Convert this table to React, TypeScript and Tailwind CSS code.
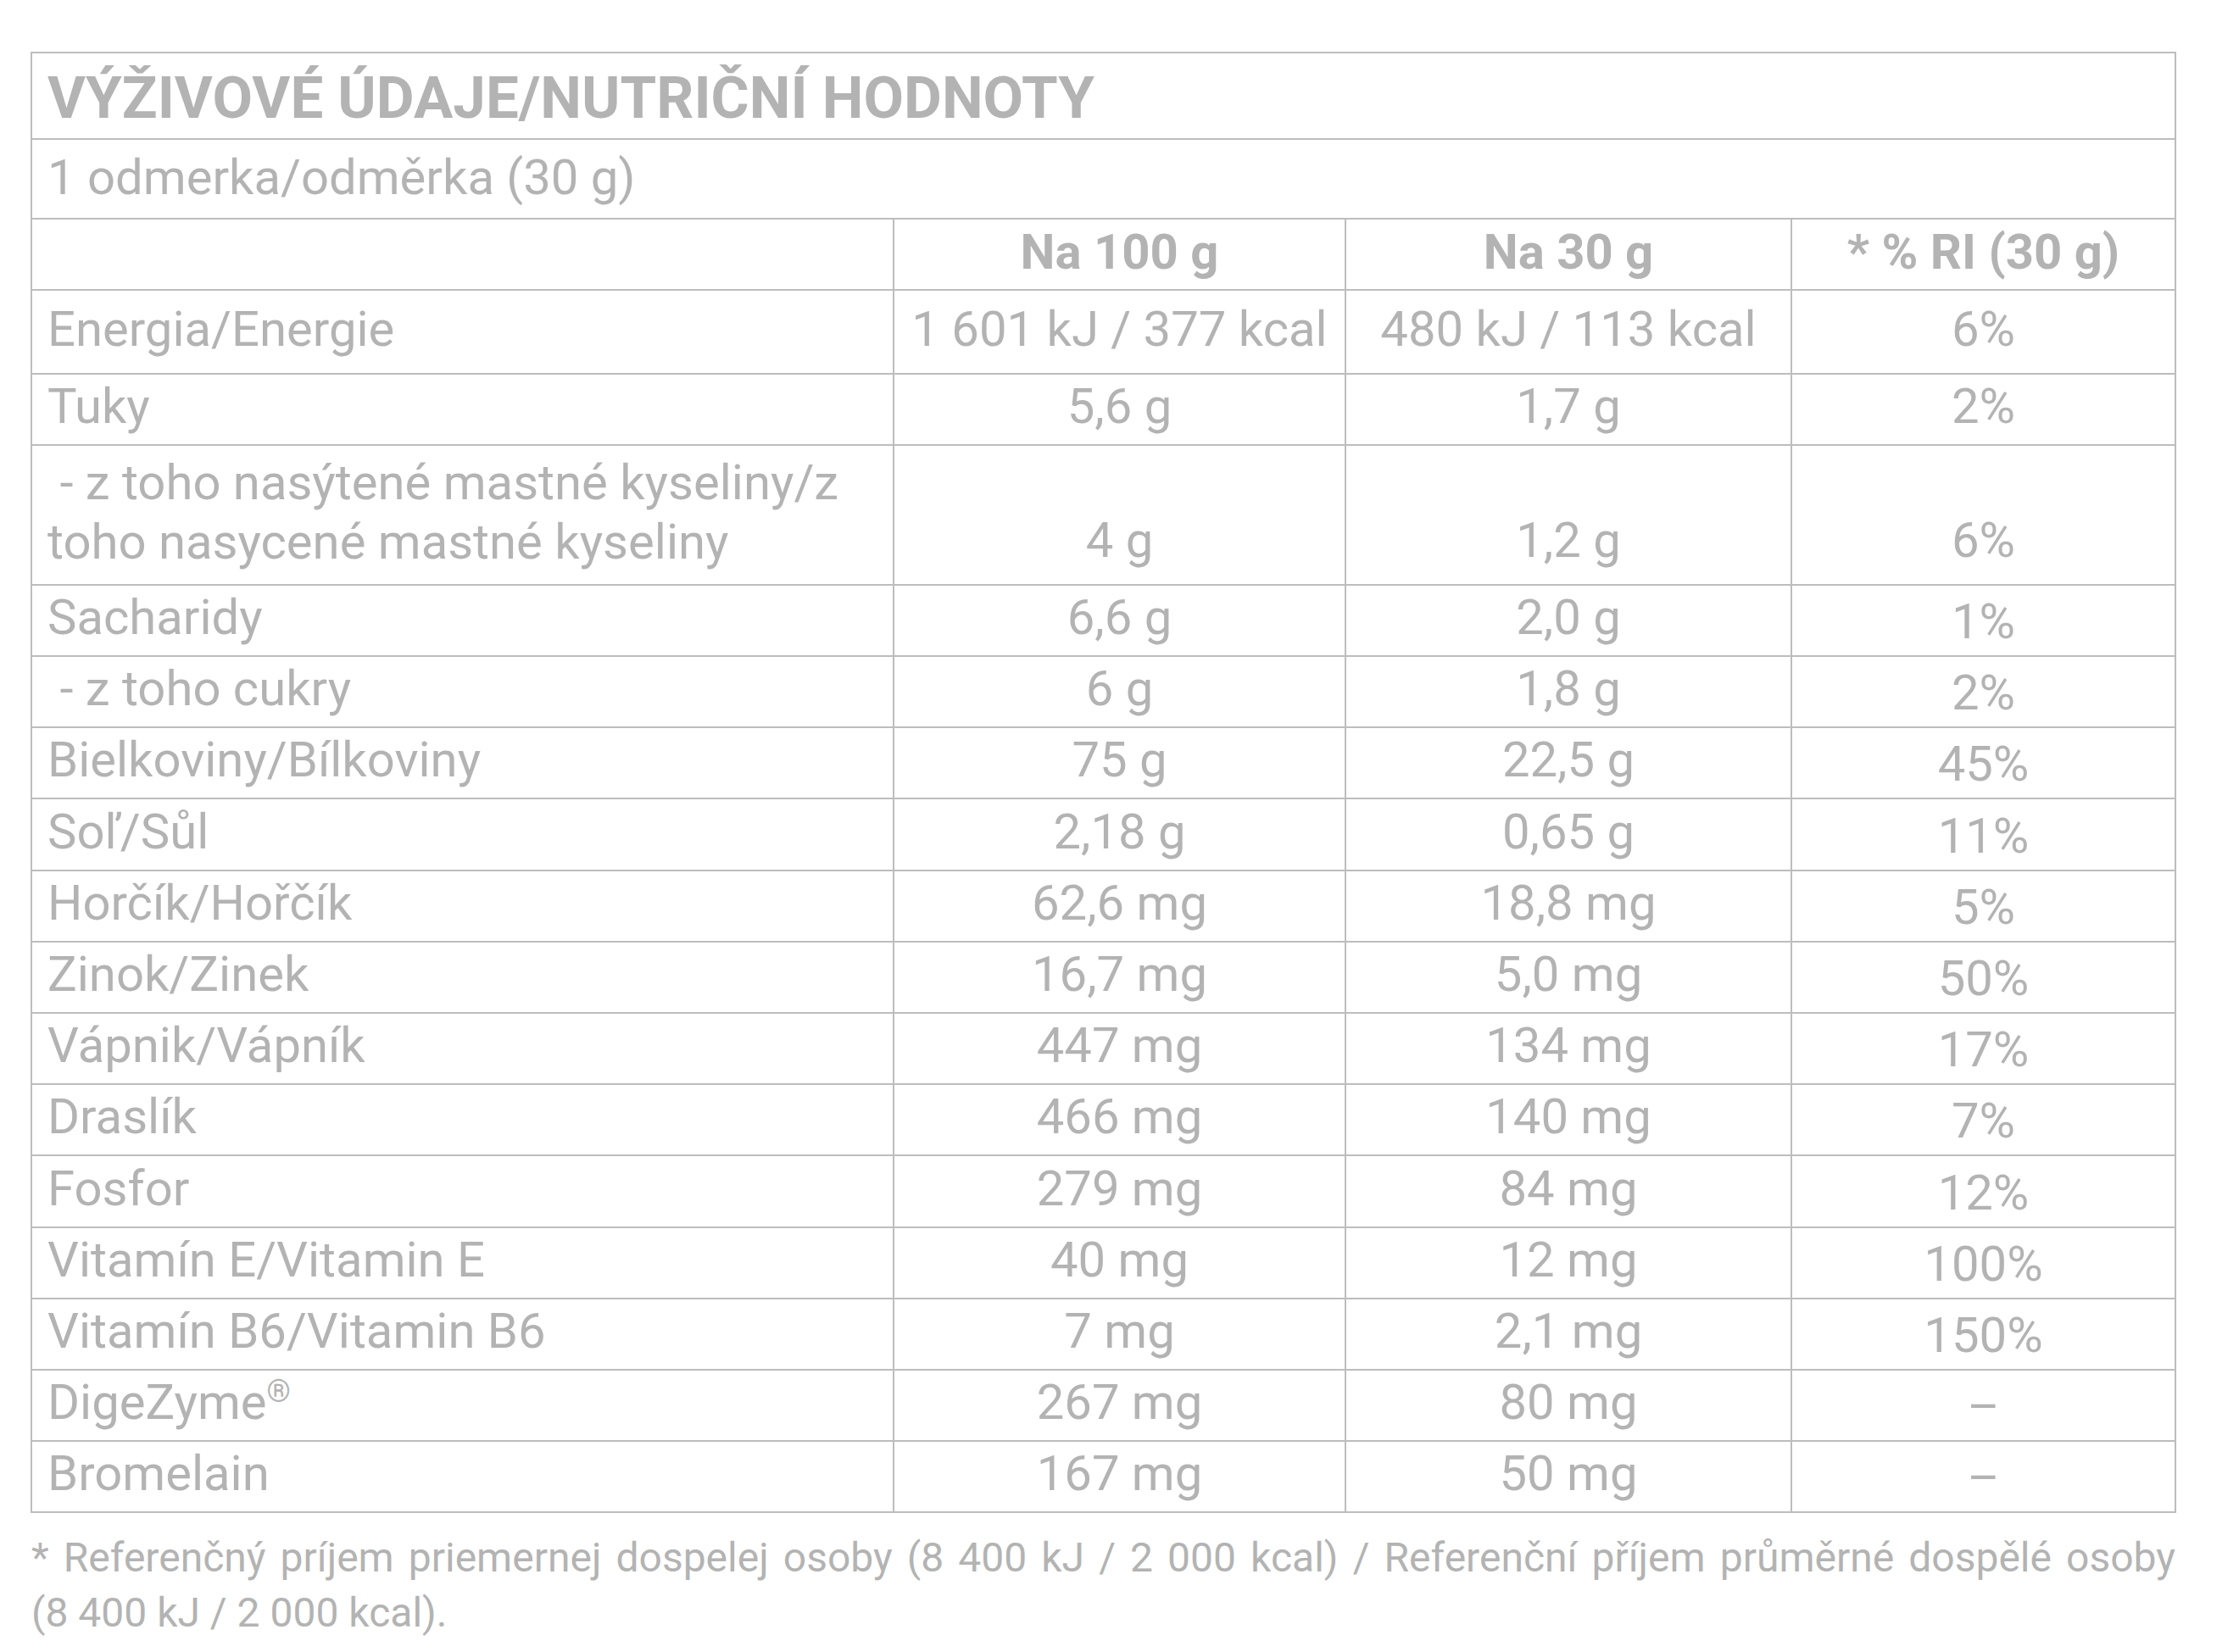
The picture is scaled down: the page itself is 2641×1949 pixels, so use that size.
type Row = {
  name: string;
  per100: string;
  per30: string;
  ri: string;
  h: string;
  tall?: boolean;
  lowRi?: boolean;
};

const rows: Row[] = [
  { name: "Energia/Energie", per100: "1 601 kJ / 377 kcal", per30: "480 kJ / 113 kcal", ri: "6%", h: "h-[99px]" },
  { name: "Tuky", per100: "5,6 g", per30: "1,7 g", ri: "2%", h: "h-[84px]" },
  {
    name: "\u00a0- z toho nasýtené mastné kyseliny/z toho nasycené mastné kyseliny",
    per100: "4 g",
    per30: "1,2 g",
    ri: "6%",
    h: "h-[165px]",
    tall: true,
  },
  { name: "Sacharidy", per100: "6,6 g", per30: "2,0 g", ri: "1%", h: "h-[84px]", lowRi: true },
  { name: "\u00a0- z toho cukry", per100: "6 g", per30: "1,8 g", ri: "2%", h: "h-[84px]", lowRi: true },
  { name: "Bielkoviny/Bílkoviny", per100: "75 g", per30: "22,5 g", ri: "45%", h: "h-[84px]", lowRi: true },
  { name: "Soľ/Sůl", per100: "2,18 g", per30: "0,65 g", ri: "11%", h: "h-[85px]", lowRi: true },
  { name: "Horčík/Hořčík", per100: "62,6 mg", per30: "18,8 mg", ri: "5%", h: "h-[84px]", lowRi: true },
  { name: "Zinok/Zinek", per100: "16,7 mg", per30: "5,0 mg", ri: "50%", h: "h-[84px]", lowRi: true },
  { name: "Vápnik/Vápník", per100: "447 mg", per30: "134 mg", ri: "17%", h: "h-[84px]", lowRi: true },
  { name: "Draslík", per100: "466 mg", per30: "140 mg", ri: "7%", h: "h-[84px]", lowRi: true },
  { name: "Fosfor", per100: "279 mg", per30: "84 mg", ri: "12%", h: "h-[85px]", lowRi: true },
  { name: "Vitamín E/Vitamin E", per100: "40 mg", per30: "12 mg", ri: "100%", h: "h-[84px]", lowRi: true },
  { name: "Vitamín B6/Vitamin B6", per100: "7 mg", per30: "2,1 mg", ri: "150%", h: "h-[84px]", lowRi: true },
  { name: "DigeZyme", per100: "267 mg", per30: "80 mg", ri: "–", h: "h-[84px]", lowRi: true },
  { name: "Bromelain", per100: "167 mg", per30: "50 mg", ri: "–", h: "h-[84px]", lowRi: true },
];

const grid = "grid grid-cols-[1015px_533px_526px_453px] border-b-2 border-[#bdbdbd]";
const valueCell = "flex justify-center border-l-2 border-[#bdbdbd] text-center";

export default function App() {
  return (
    <div className="w-[2641px] h-[1949px] bg-white pt-[61px] pl-[36px] text-[#b3b3b3] font-[family-name:Roboto,sans-serif]">
      {/* table */}
      <div className="w-[2531px] border-t-2 border-x-2 border-[#bdbdbd] text-[58px] leading-[1.2]">
        <div className="h-[102px] border-b-2 border-[#bdbdbd] pl-[18px] pt-[12px] text-[69px] font-bold">
          VÝŽIVOVÉ ÚDAJE/NUTRIČNÍ HODNOTY
        </div>
        <div className="h-[94px] border-b-2 border-[#bdbdbd] pl-[18px] pt-[10px]">
          1 odmerka/odměrka (30 g)
        </div>
        <div className={`${grid} h-[84px] font-bold`}>
          <div />
          <div className={`${valueCell} items-center pb-[4px]`}>Na 100 g</div>
          <div className={`${valueCell} items-center pb-[4px]`}>Na 30 g</div>
          <div className={`${valueCell} items-center pb-[4px]`}>* % RI (30 g)</div>
        </div>

        {rows.map((r) => {
          const align = r.tall ? "items-end pb-[16px]" : "items-center pb-[6px]";
          return (
            <div key={r.name} className={`${grid} ${r.h}`}>
              <div className="flex items-center pl-[18px] pr-[20px] pb-[6px]">
                <span>
                  {r.name}
                  {r.name === "DigeZyme" && <span className="align-super text-[36px]">®</span>}
                </span>
              </div>
              <div className={`${valueCell} ${align}`}>{r.per100}</div>
              <div className={`${valueCell} ${align}`}>{r.per30}</div>
              <div className={`${valueCell} ${r.lowRi ? "items-center pt-[4px]" : align}`}>{r.ri}</div>
            </div>
          );
        })}
      </div>

      {/* footnote */}
      <div className="w-[2529px] ml-[1px] mt-[20px] text-[48px] leading-[65px]">
        <div className="text-justify [text-align-last:justify]">
          * Referenčný príjem priemernej dospelej osoby (8 400 kJ / 2 000 kcal) / Referenční příjem průměrné dospělé osoby
        </div>
        <div>(8 400 kJ / 2 000 kcal).</div>
      </div>
    </div>
  );
}
